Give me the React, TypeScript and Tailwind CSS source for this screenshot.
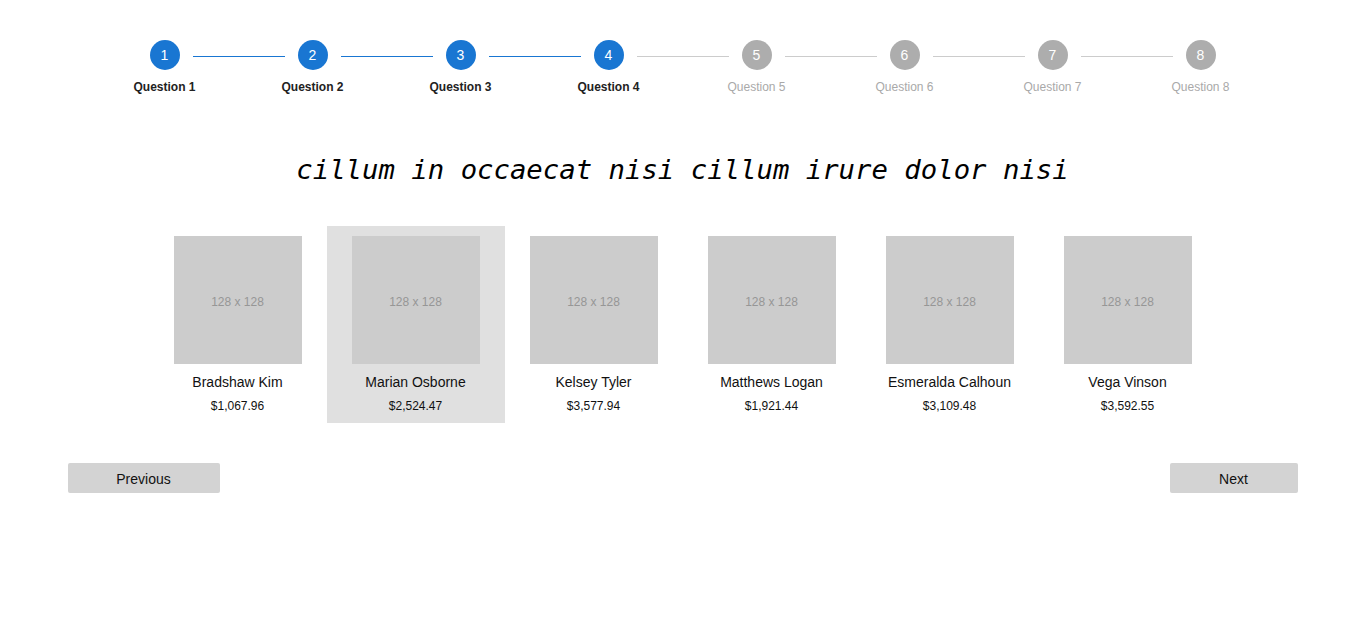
import { useState } from "react";

const steps = [1, 2, 3, 4, 5, 6, 7, 8];
const current = 4;

const products = [
    { name: "Bradshaw Kim", price: "$1,067.96" },
    { name: "Marian Osborne", price: "$2,524.47" },
    { name: "Kelsey Tyler", price: "$3,577.94" },
    { name: "Matthews Logan", price: "$1,921.44" },
    { name: "Esmeralda Calhoun", price: "$3,109.48" },
    { name: "Vega Vinson", price: "$3,592.55" },
];

const Stepper = () => {
    return (
        <div className="grid grid-cols-8 px-[23px] pt-[40px]">
            {steps.map((n) => {
                const done = n <= current;
                const leftDone = n <= current;
                const rightDone = n < current;
                return (
                    <div key={n} className="flex flex-col items-center">
                        <div className="flex items-center w-full h-[30px]">
                            <div
                                className={`flex-1 mr-[13px] mt-[2px] h-px ${
                                    n === 1 ? "bg-transparent" : leftDone ? "bg-[#1976d2]" : "bg-[#cccccc]"
                                }`}
                            />
                            <div
                                className={`w-[30px] h-[30px] rounded-full flex items-center justify-center text-white text-[14px] ${
                                    done ? "bg-[#1976d2]" : "bg-[#adadad]"
                                }`}
                            >
                                {n}
                            </div>
                            <div
                                className={`flex-1 ml-[13px] mt-[2px] h-px ${
                                    n === 8 ? "bg-transparent" : rightDone ? "bg-[#1976d2]" : "bg-[#cccccc]"
                                }`}
                            />
                        </div>
                        <div
                            className={`mt-[10px] text-[12px] leading-[14px] ${
                                done ? "font-bold text-[#222]" : "text-[#a9a9a9]"
                            }`}
                        >
                            Question {n}
                        </div>
                    </div>
                );
            })}
        </div>
    );
};

export default function App() {
    const [selected, setSelected] = useState(1);

    return (
        <div className="min-h-screen bg-white" style={{ fontFamily: '"Liberation Sans", Arial, sans-serif' }}>
            <div className="w-[1230px] mx-auto">
                {/* Steps */}
                <Stepper />

                {/* Question */}
                <h1
                    className="mt-[58px] text-center italic text-[27.3px] leading-[36px] text-black"
                    style={{ fontFamily: '"DejaVu Sans Mono", monospace' }}
                >
                    cillum in occaecat nisi cillum irure dolor nisi
                </h1>

                {/* Options */}
                <div className="mt-[38px] flex justify-center">
                    {products.map((p, i) => (
                        <div
                            key={p.name}
                            onClick={() => setSelected(i)}
                            className={`w-[178px] px-[25px] pt-[10px] pb-[9px] flex flex-col items-center cursor-pointer ${
                                selected === i ? "bg-[#e0e0e0]" : ""
                            }`}
                        >
                            <div className="w-[128px] h-[128px] bg-[#cccccc] flex items-center justify-center pt-[3px] text-[12px] text-[#969696]">
                                128 x 128
                            </div>
                            <div className="mt-[8px] text-[14px] leading-[20px] text-[#111] whitespace-nowrap">{p.name}</div>
                            <div className="mt-[6px] text-[12px] leading-[16px] text-[#111]">{p.price}</div>
                        </div>
                    ))}
                </div>

                {/* Navigation */}
                <div className="mt-[40px] flex justify-between">
                    <button className="w-[152px] h-[30px] pt-[2px] bg-[#d3d3d3] rounded-[2px] text-[14px] text-[#111]">
                        Previous
                    </button>
                    <button className="w-[128px] h-[30px] pt-[2px] bg-[#d3d3d3] rounded-[2px] text-[14px] text-[#111]">
                        Next
                    </button>
                </div>
            </div>
        </div>
    );
}
